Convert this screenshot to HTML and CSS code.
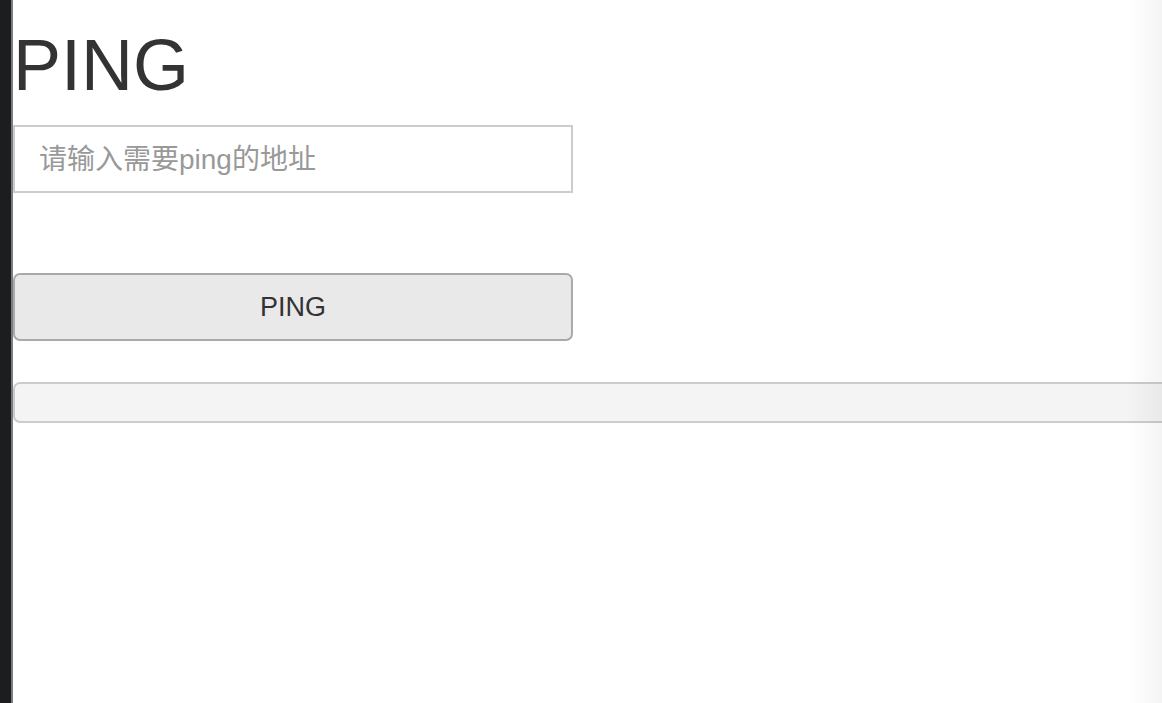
FILE: index.html
```html
<!DOCTYPE html>
<html lang="zh-CN">
<head>
    <meta charset="UTF-8">
    <meta name="viewport" content="width=device-width, initial-scale=1.0">
    <title>PING</title>
    <link rel="stylesheet" href="styles.css">
</head>
<body>
    <div class="sidebar"></div>
    <div class="container">
        <h1>PING</h1>
        <form id="pingForm">
            <input type="text" id="host" name="host" placeholder="请输入需要ping的地址">
            <button type="button" onclick="doPing()">PING</button>
        </form>
        <div id="result"></div>
    </div>
    <div class="edge-shade"></div>

    <script>
        function doPing() {
            // Mostrar la dirección ingresada
            var host = document.getElementById('host').value;
            var resultDiv = document.getElementById('result');
            resultDiv.textContent = host ? "PING " + host : "";
        }
    </script>
</body>
</html>
```

FILE: styles.css
```css
body {
    font-family: 'Liberation Sans', Arial, 'Noto Sans CJK SC', sans-serif;
    background-color: #fff;
    color: #333;
    margin: 0;
    padding: 0;
    display: flex;
    height: 100vh;
    overflow: hidden;
}

.sidebar {
    flex: 0 0 11px;
    background-color: #1c1d1f;
    border-right: 2px solid #7d7d7d;
}

.container {
    flex: 1;
    min-width: 0;
    overflow: hidden;
}

h1 {
    font-size: 72px;
    font-weight: 400;
    line-height: 1.1;
    margin: 26px 0 20px 0;
}

form {
    display: flex;
    flex-direction: column;
    gap: 80px;
    width: 560px;
}

form input[type="text"] {
    box-sizing: border-box;
    height: 68px;
    padding: 2px 24px 0 24px;
    border: 2px solid #ccc;
    border-radius: 0;
    font-family: 'Liberation Sans', Arial, 'Noto Sans CJK SC', sans-serif;
    font-size: 28px;
    color: #333;
    outline: none;
}

form input::placeholder {
    color: #999;
}

button {
    box-sizing: border-box;
    height: 68px;
    background-color: #e9e9e9;
    color: #333;
    border: 2px solid #aaa;
    border-radius: 7px;
    cursor: pointer;
    font-family: 'Liberation Sans', Arial, sans-serif;
    font-size: 27px;
}

#result {
    box-sizing: border-box;
    margin-top: 41px;
    width: calc(100% + 20px);
    height: 41px;
    background-color: #f4f4f4;
    border: 2px solid #ccc;
    border-radius: 7px;
}

.edge-shade {
    position: fixed;
    top: 0;
    right: 0;
    width: 34px;
    height: 100%;
    background: linear-gradient(to right, rgba(0, 0, 0, 0), rgba(0, 0, 0, 0.045));
    pointer-events: none;
}
```
